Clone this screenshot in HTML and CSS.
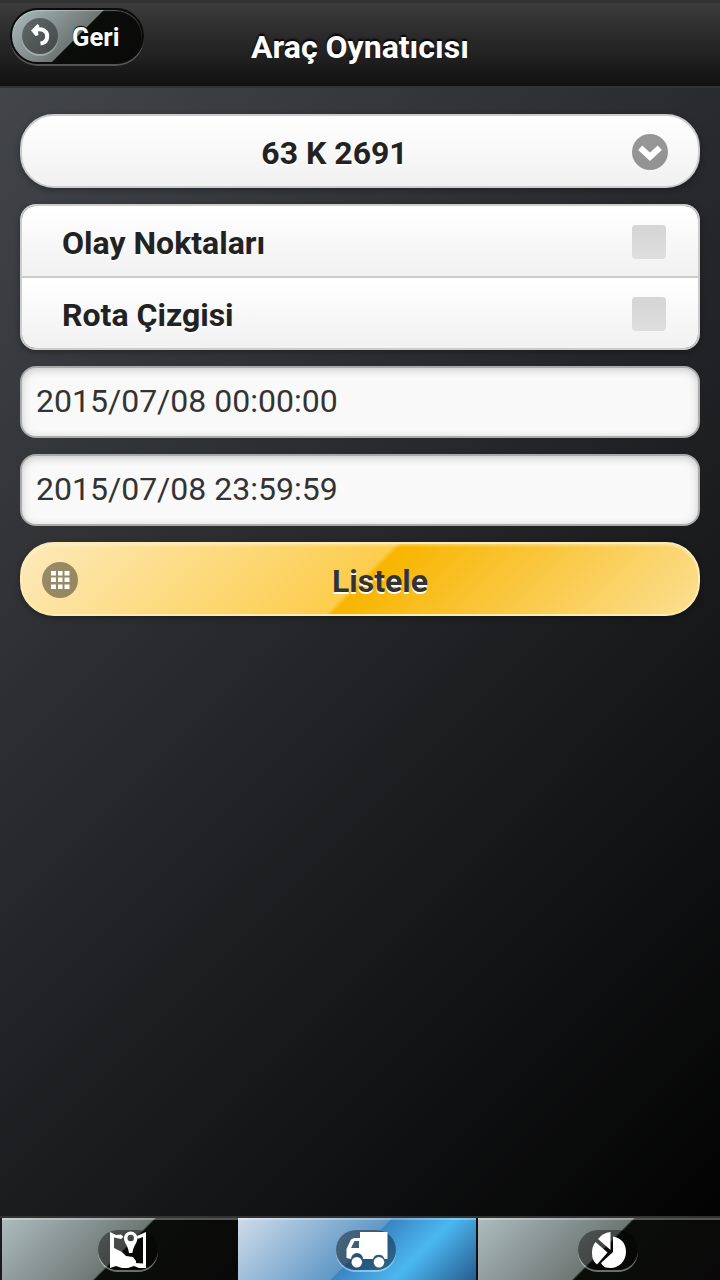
FILE: index.html
```html
<!DOCTYPE html>
<html lang="tr">
<head>
    <meta charset="UTF-8">
    <meta name="viewport" content="width=device-width, initial-scale=1.0">
    <title>Araç Oynatıcısı</title>
    <link rel="stylesheet" href="styles.css">
</head>
<body>
    <div class="page">
        <header class="header">
            <a class="back-btn" href="#">
                <span class="icon-disc">
                    <svg width="36" height="36" viewBox="0 0 36 36">
                        <path d="M13.500 11.800C20 9.800 25.200 13 25.200 18C25.200 22.500 22.500 25 18.500 25.600" fill="none" stroke="#fff" stroke-width="4"/>
                        <path d="M9 12.500L15.500 6L17.500 8L15.500 10.800L16.500 17L13.500 18Z" fill="#fff"/>
                    </svg>
                </span>
                <span class="back-text">Geri</span>
            </a>
            <h1 class="title">Araç Oynatıcısı</h1>
        </header>

        <main class="content">
            <button class="select" type="button">
                <span class="select-text">63 K 2691</span>
                <span class="icon-disc">
                    <svg width="36" height="36" viewBox="0 0 36 36">
                        <path d="M8.200 13.700L18 22.800L27.800 13.700" fill="none" stroke="#fff" stroke-width="6"/>
                    </svg>
                </span>
            </button>

            <div class="check-group">
                <div class="check-row"><span>Olay Noktaları</span><span class="box"></span></div>
                <div class="check-row"><span>Rota Çizgisi</span><span class="box"></span></div>
            </div>

            <input class="date-input" type="text" value="2015/07/08 00:00:00">
            <input class="date-input" type="text" value="2015/07/08 23:59:59">

            <button class="list-btn" type="button">
                <span class="icon-disc">
                    <svg width="36" height="36" viewBox="0 0 36 36">
                        <path d="M9 9h5v4.500H9zM16 9h4.500v4.500H16zM22.500 9h5v4.500h-5zM9 15.500h5V20H9zM16 15.500h4.500V20H16zM22.500 15.500h5V20h-5zM9 22.500h5V27H9zM16 22.500h4.500V27H16zM22.500 22.500h5V27h-5z" fill="#fff"/>
                    </svg>
                </span>
                <span class="list-text">Listele</span>
            </button>
        </main>

        <nav class="navbar">
            <a class="tab tab-first" href="#">
                <span class="tab-icon">
                    <svg width="60" height="40" viewBox="0 0 60 40">
                        <path d="M12 2L18 5L23 4.500L25.500 7L23 9L16 7.500V18L20 20L24 22L28 26L35 27L38 31L38 35L36 36L30 38H24L18 36L12 38Z" fill="#fff"/>
                        <path d="M39 6L48 2V38H41L36 36L37 33L45 33.500V7L39.500 9Z" fill="#fff"/>
                        <path d="M32.700 1.500A6.700 6.700 0 0 0 26 8.200C26 13 30 15 31 23H34.400C35.500 15 39.400 13 39.400 8.200A6.700 6.700 0 0 0 32.700 1.500ZM32.700 4.800A3.200 3.200 0 1 1 32.700 11.200A3.200 3.200 0 1 1 32.700 4.800Z" fill="#fff" fill-rule="evenodd"/>
                    </svg>
                </span>
            </a>
            <a class="tab tab-active" href="#">
                <span class="tab-icon">
                    <svg width="60" height="40" viewBox="0 0 60 40">
                        <path d="M24 2H51.500V29H48.500A6 6 0 0 0 37 29H27A6 6 0 0 0 15 29L10.500 28V19L15 9.500L18 8H24ZM18.500 11L15 18H23V11Z" fill="#fff" fill-rule="evenodd"/>
                        <circle cx="20.800" cy="32.200" r="5.300" fill="#fff"/>
                        <circle cx="43" cy="32.200" r="5.300" fill="#fff"/>
                    </svg>
                </span>
            </a>
            <a class="tab" href="#">
                <span class="tab-icon">
                    <svg width="60" height="40" viewBox="0 0 60 40">
                        <path d="M32.500 2V20L20 9Q24.500 3 32.500 2Z" fill="#fff"/>
                        <path d="M17.500 12L29.500 22.500L19 34.500Q14 31 14 23Q14 16 17.500 12Z" fill="#fff"/>
                        <path d="M35 6.500C43 8 48 13 48 22C48 31 41 38 32.500 38Q26 38 24 34.500L23 33L35 22Z" fill="#fff"/>
                    </svg>
                </span>
            </a>
        </nav>
    </div>
</body>
</html>
```
FILE: styles.css
```css
* {
    box-sizing: border-box;
}
body {
    margin: 0;
    font-family: Roboto, "Liberation Sans", sans-serif;
    background: #000;
}
.page {
    display: flex;
    flex-direction: column;
    height: 1280px;
    overflow: hidden;
    background: linear-gradient(135deg, #45484d 0%, #000 100%);
}
a {
    color: #fff;
    text-decoration: none;
}
button {
    font-family: inherit;
    cursor: pointer;
}
.icon-disc {
    flex: none;
    display: block;
    width: 36px;
    height: 36px;
    border-radius: 50%;
    background: rgba(0, 0, 0, 0.4);
}
.icon-disc svg,
.tab-icon svg {
    display: block;
}

/* header */
.header {
    position: relative;
    flex: none;
    height: 88px;
    border-top: 3px solid #333;
    border-bottom: 2px solid #333;
    background: linear-gradient(#3c3c3c, #111);
}
.title {
    margin: 0;
    padding-top: 22px;
    font-size: 32px;
    line-height: 44px;
    text-align: center;
    color: #fff;
    text-shadow: 0 -2px 2px #000;
}
.back-btn {
    position: absolute;
    left: 10px;
    top: 5px;
    display: flex;
    align-items: center;
    gap: 14px;
    width: 134px;
    height: 56px;
    padding-left: 10px;
    border: 2px solid #0b0b0b;
    border-radius: 28px;
    background: linear-gradient(135deg, #aebcbf 0%, #6e7774 50%, #0a0e0a 51%, #0a0809 100%);
    box-shadow: 0 2px 0 rgba(255, 255, 255, 0.25), inset 0 1px 1px rgba(255, 255, 255, 0.35);
    font-size: 25.6px;
    font-weight: bold;
    text-shadow: 0 -1px 1px #000;
}
.back-btn .icon-disc {
    box-shadow: 0 2px 0 rgba(255, 255, 255, 0.3);
}
.back-text {
    padding-top: 1px;
}

/* form */
.content {
    flex: 1;
    display: flex;
    flex-direction: column;
    padding: 26px 20px 0;
}
.select {
    display: flex;
    align-items: center;
    height: 74px;
    margin-bottom: 16px;
    padding: 2px 30px 0 24px;
    border: 2px solid #ccc;
    border-radius: 34px;
    background: linear-gradient(#fff, #f1f1f1);
    box-shadow: 0 2px 6px rgba(0, 0, 0, 0.3);
    color: #222;
    font-size: 32px;
    font-weight: bold;
}
.select-text {
    flex: 1;
    padding: 1px 9px 0 0;
    text-shadow: 0 2px 0 #fff;
}
.check-group {
    height: 146px;
    margin-bottom: 16px;
    border: 2px solid #ccc;
    border-radius: 16px;
    overflow: hidden;
    box-shadow: 0 2px 6px rgba(0, 0, 0, 0.3);
}
.check-row {
    display: flex;
    align-items: center;
    justify-content: space-between;
    height: 71px;
    padding: 3px 32px 0 40px;
    background: linear-gradient(#fff, #f1f1f1);
    color: #222;
    font-size: 32px;
    font-weight: bold;
    text-shadow: 0 2px 0 #fff;
}
.check-row:first-child {
    height: 72px;
    border-bottom: 2px solid #ccc;
}
.box {
    width: 34px;
    height: 34px;
    margin-bottom: 2px;
    border-radius: 4px;
    background: linear-gradient(#d5d5d5, #dedede);
}
.date-input {
    height: 72px;
    margin: 0 0 16px;
    padding: 0 14px 2px;
    border: 2px solid #aaa;
    border-radius: 16px;
    outline: none;
    background: #f9f9f9;
    box-shadow: inset 0 2px 8px rgba(0, 0, 0, 0.2);
    color: #333;
    font-family: inherit;
    font-size: 32px;
}
.list-btn {
    display: flex;
    align-items: center;
    height: 74px;
    padding: 2px 20px 0;
    border: 2px solid #fdebb5;
    border-radius: 34px;
    background: linear-gradient(135deg, #fceabb 0%, #fccd4d 50%, #f8b500 51%, #fbdf93 100%);
    box-shadow: 0 2px 6px rgba(0, 0, 0, 0.3), inset 0 2px 2px rgba(255, 255, 255, 0.3);
    color: #333;
    font-size: 32px;
    font-weight: bold;
}
.list-text {
    flex: 1;
    padding: 2px 0 0 4px;
    text-shadow: 0 2px 0 #fff;
}

/* bottom tabs run slightly past the screen edge */
.navbar {
    flex: none;
    display: grid;
    grid-template-columns: 236px 240px 242px;
    height: 70px;
    margin-bottom: -6px;
    padding-left: 2px;
    border-top: 2px solid #333;
}
.tab {
    display: flex;
    justify-content: center;
    padding: 12px 0 0 18px;
    background: linear-gradient(135deg, #aebcbf 0%, #6e7774 50%, #0a0e0a 51%, #0a0809 100%);
    box-shadow: inset 0 2px 0 rgba(255, 255, 255, 0.3);
}
.tab-first {
    padding-left: 16px;
}
.tab-active {
    border-right: 2px solid #111;
    background: linear-gradient(135deg, #cedbe9 0%, #aac5de 17%, #6199c7 50%, #3a84c3 51%, #419ad6 59%, #4bb8f0 71%, #3a8bc2 84%, #26558b 100%);
}
.tab-icon {
    width: 60px;
    height: 40px;
    border-radius: 20px;
    background: rgba(0, 0, 0, 0.4);
    box-shadow: 0 2px 0 rgba(255, 255, 255, 0.4);
}
```
